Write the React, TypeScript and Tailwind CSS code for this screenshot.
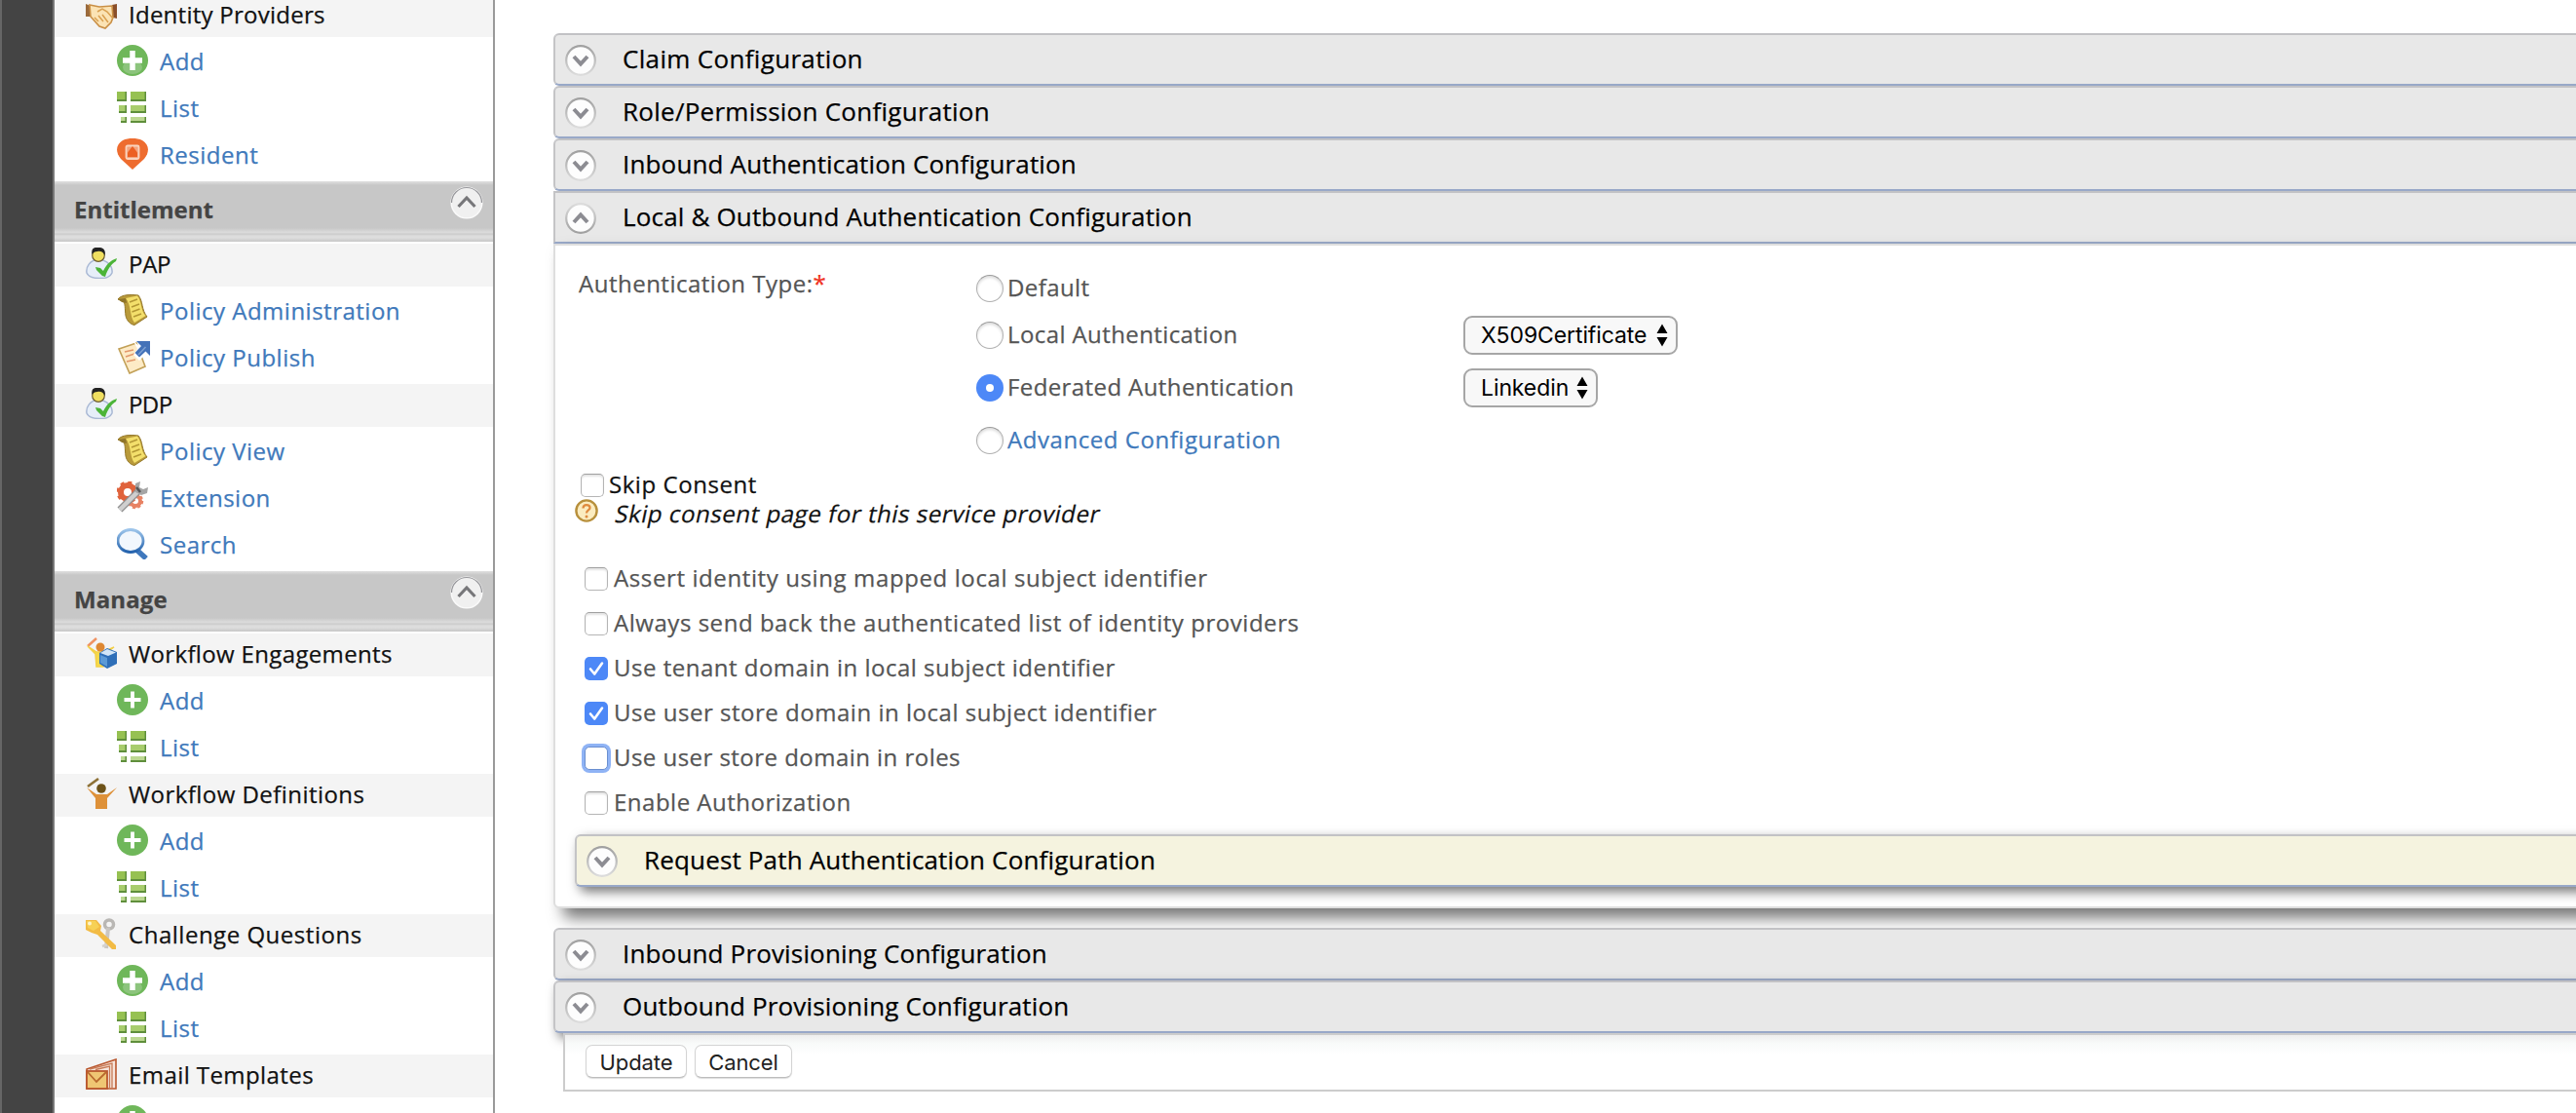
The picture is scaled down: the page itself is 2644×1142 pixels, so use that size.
import type { ReactNode } from "react";

function HandshakeIcon() {
  return (
    <svg width="32" height="32" viewBox="0 0 32 32">
      <path d="M0 6 L5 8 L5 19 L0 19Z" fill="#9a6a3c" />
      <path d="M27 7 L32 6 L32 21 L28 20Z" fill="#8a4f2a" />
      <path d="M4 7 L14 9 L27 8 L28 20 L26 25 L20 31 L14 29 L5 19Z" fill="#fbe3b4" stroke="#c98f45" strokeWidth="1.6" />
      <path d="M12 14 L17 11 L22 14 L28 21 M9 20 l4 4 M13 18 l5 6 M17 17 l6 8" stroke="#d9a050" strokeWidth="1.5" fill="none" />
    </svg>
  );
}

function AddIcon({ thick }: { thick?: boolean }) {
  return (
    <svg width="32" height="32" viewBox="0 0 32 32">
      <circle cx="16" cy="16" r="16" fill="#6fb75a" />
      {thick && <ellipse cx="16" cy="23" rx="10" ry="7" fill="#8cc47c" />}
      <path d={thick ? "M16 6v20M6 16h20" : "M16 7.500v17M7.500 16h17"} stroke="#fff" strokeWidth={thick ? 5.5 : 3.8} />
    </svg>
  );
}

function Tile({ x, y, w, h, fill }: { x: number; y: number; w: number; h: number; fill: string }) {
  return (
    <>
      <rect x={x} y={y} width={w} height={h} fill="#5f8f3c" />
      <rect x={x} y={y} width={w - 1.5} height={h - 2} fill={fill} />
    </>
  );
}

function ListIcon() {
  return (
    <svg width="32" height="32" viewBox="0 0 32 32">
      <Tile x={0} y={0} w={10} h={10} fill="#96c152" />
      <Tile x={14} y={0} w={16} h={10} fill="#96c152" />
      <Tile x={2} y={14} w={8} h={8} fill="#a8cd6d" />
      <Tile x={14} y={14} w={16} h={8} fill="#a8cd6d" />
      <Tile x={4} y={26} w={6} h={6} fill="#bcd891" />
      <Tile x={14} y={26} w={16} h={6} fill="#bcd891" />
    </svg>
  );
}

function ResidentIcon() {
  return (
    <svg width="32" height="32" viewBox="0 0 32 32">
      <path d="M16 32 L4 21 C-2 14 -1 6 6 2 C12 -0.6 20 -0.6 26 2 C33 6 34 14 28 21Z" fill="#ee6c2f" />
      <rect x="9.500" y="7.500" width="13" height="13.500" rx="1.5" fill="#f4a27c" stroke="#f9d3be" strokeWidth="1.800" />
      <path d="M16 8 L21 14.500 V19 H11 V14.500Z" fill="#ec5f22" />
    </svg>
  );
}

function UserCheckIcon() {
  return (
    <svg width="32" height="32" viewBox="0 0 32 32">
      <path d="M13 12 C4 13 0 20 1 26 C3 31 9 31.5 14 31.5 C20 31.5 25 31 27 26 C28 19 22 13 13 12Z" fill="#e6eef8" stroke="#a9b8d4" strokeWidth="1.5" />
      <circle cx="13" cy="8" r="6.3" fill="#f0df60" stroke="#6b5c30" strokeWidth="1.2" />
      <path d="M6.5 7 C5 0 10 -0.5 13 0 C18 -0.5 21 3 19.5 8 C18 4 15 3.5 12 4 C9 4 8 5 6.5 7Z" fill="#222" />
      <path d="M10 20 L15 21 L18 24 C21 18 25 13 32 11 L31 14 C26 17 22 23 20 30 L17 29 L11 23Z" fill="#4bb438" />
    </svg>
  );
}

function PolicyIcon() {
  return (
    <svg width="32" height="32" viewBox="0 0 32 32">
      <path d="M1 5 C5 0 14 0 22 1 C27 7 25 16 31 23 L18 31.5 C14 31 10 27 9 22 C8 15 9 9 6 7Z" fill="#b99a3a" stroke="#94782a" />
      <path d="M9 4 L21 1.5 C26 8 24 16 29.5 22 L18 29 C13 23 15 11 9 4Z" fill="#f3df6b" />
      <path d="M13 8 l8-3 M15 13 l8-3 M15.500 18 l8-3 M17 23 l8-3" stroke="#b39734" strokeWidth="1.6" />
      <path d="M1 5 L9 4 L10 9 L5 8Z" fill="#8f7429" />
    </svg>
  );
}

function PublishIcon() {
  return (
    <svg width="34" height="34" viewBox="0 0 34 34">
      <path d="M2 8 L20 2 L29 26 L13 33Z" fill="#fdebc6" stroke="#c2a057" strokeWidth="1.6" />
      <path d="M8 11 l9-2 M9 16 l9-3 M10 21 l9-2" stroke="#e2976a" strokeWidth="1.5" />
      <path d="M17 0 L21 8 L17 14 L23 20 L31 12Z" fill="#fff" />
      <path d="M20 0 H34 V15 L29.500 10.500 L23 16.500 L18.500 12 L25 5Z" fill="#4472b8" />
      <path d="M22 14 L29.500 6" stroke="#7ea0d2" strokeWidth="1.500" fill="none" />
    </svg>
  );
}

function ExtensionIcon() {
  return (
    <svg width="32" height="32" viewBox="0 0 32 32">
      <circle cx="11" cy="11" r="7" fill="none" stroke="#e0633c" strokeWidth="6" />
      <circle cx="11" cy="11" r="10" fill="none" stroke="#e0633c" strokeWidth="3" strokeDasharray="4 3.850" />
      <circle cx="19" cy="20" r="5" fill="none" stroke="#e88263" strokeWidth="4" />
      <circle cx="19" cy="20" r="7" fill="none" stroke="#e88263" strokeWidth="2.500" strokeDasharray="3 2.500" />
      <path d="M3 29 L22 10" stroke="#8f8f8f" strokeWidth="7" />
      <path d="M3 29 L22 10" stroke="#cfcfcf" strokeWidth="4.500" />
      <path d="M19 2 L24 0 L23 6 L27 8 L32 6 L31 12 L25 14 L19 11Z" fill="#a5a5a5" />
      <path d="M20 6 l4 5" stroke="#555" strokeWidth="2.500" />
    </svg>
  );
}

function SearchIcon() {
  return (
    <svg width="32" height="32" viewBox="0 0 32 32">
      <defs>
        <linearGradient id="lens-ring" x1="0" y1="0" x2="0" y2="1">
          <stop offset="0" stopColor="#9cc4ea" />
          <stop offset="1" stopColor="#2563ad" />
        </linearGradient>
      </defs>
      <path d="M20 22 L30 31" stroke="#3f78bd" strokeWidth="5.500" />
      <ellipse cx="14" cy="13" rx="13" ry="11.500" fill="#f2f7fd" stroke="url(#lens-ring)" strokeWidth="2.800" />
    </svg>
  );
}

function EngagementIcon() {
  return (
    <svg width="32" height="32" viewBox="0 0 32 32">
      <path d="M2 9 L11 1" stroke="#ef9262" strokeWidth="2.500" />
      <path d="M2 9 L10 17 L11 30 H18 V18 L29 10 L18 15 H11Z" fill="#f6d94a" stroke="#f3cf45" strokeWidth="1.500" />
      <circle cx="15" cy="10" r="4.500" fill="#de8832" />
      <path d="M14 16 L22 11 L32 15 V27 L22 32 L14 27Z" fill="#2f6fb8" />
      <path d="M15 16 L22 12 L31 15.500 L23 19Z" fill="#d3e6f7" />
      <path d="M15 18 L22 21 V30 L15 26Z" fill="#5c9ad6" />
    </svg>
  );
}

function DefinitionIcon() {
  return (
    <svg width="32" height="32" viewBox="0 0 32 32">
      <path d="M2 9 L13 1" stroke="#8d7136" strokeWidth="2.600" />
      <path d="M1 10 L10 21 V32 H22 V21 L32 10 L22 17 H11Z" fill="#de9139" />
      <circle cx="16" cy="11" r="4.800" fill="#6d5218" />
    </svg>
  );
}

function KeysIcon() {
  return (
    <svg width="32" height="32" viewBox="0 0 32 32">
      <circle cx="24" cy="6.500" r="4.500" fill="none" stroke="#b9b7b4" strokeWidth="3.500" />
      <path d="M23 10 L21 31" stroke="#c9c6c2" strokeWidth="4" />
      <path d="M17 29 l5-2" stroke="#d5d2ce" strokeWidth="2.500" />
      <path d="M0 2 L11 2 L16 8 L15 13 L31 28 V32 H27 L12 17 L6 15 L0 12Z" fill="#f2bb45" />
      <path d="M1 3 L10 3 L14 9 L8 13 L2 10Z" fill="#f7d155" />
      <circle cx="4" cy="5.500" r="2" fill="#fff3c9" />
    </svg>
  );
}

function EmailIcon() {
  return (
    <svg width="32" height="32" viewBox="0 0 32 32">
      <path d="M1 11 L31 1 V31 H1Z" fill="#f7e6dc" stroke="#b9572e" strokeWidth="1.600" />
      <path d="M4 11 L27 5 V31 M10 11.500 L24.500 8 V31" fill="none" stroke="#c77a55" strokeWidth="1.300" />
      <rect x="1" y="13" width="21" height="18" fill="#efc673" stroke="#b9572e" strokeWidth="1.800" />
      <path d="M2 14 L11 24 L21 14" fill="none" stroke="#b9692e" strokeWidth="1.800" />
    </svg>
  );
}

function CollapseIcon() {
  return (
    <svg width="34" height="34" viewBox="0 0 34 34">
      <circle cx="17" cy="17" r="15.800" fill="#f0f0f0" stroke="#fafafa" strokeWidth="1.500" />
      <path d="M1.500 17 A15.500 15.500 0 0 1 32.500 17" fill="none" stroke="#98989c" strokeWidth="1.200" />
      <path d="M8.500 21 L17 12 L25.500 21" fill="none" stroke="#77777a" strokeWidth="3.200" />
    </svg>
  );
}

function TriggerIcon({ open }: { open?: boolean }) {
  return (
    <svg width="32" height="32" viewBox="0 0 32 32" className={open ? "rotate-180" : ""}>
      <defs>
        <linearGradient id="trigger-ring" x1="0" y1="0" x2="0" y2="1">
          <stop offset="0" stopColor="#a0a0a0" />
          <stop offset="1" stopColor="#dcdcdc" />
        </linearGradient>
      </defs>
      <circle cx="16" cy="16" r="14.800" fill="#fdfdfd" stroke="url(#trigger-ring)" strokeWidth="2.200" />
      <path d="M9 12 L16 19.500 L23 12" fill="none" stroke="#8c8c92" strokeWidth="4" />
    </svg>
  );
}

function HelpIcon() {
  return (
    <svg width="24" height="24" viewBox="0 0 24 24">
      <circle cx="12" cy="12" r="10.600" fill="#fbecc0" stroke="#b8903c" strokeWidth="2.400" />
      <path d="M8.500 9.500 C8.500 5 15.500 5 15.500 9 C15.500 11.500 12 11.500 12 14.500" fill="none" stroke="#df8a3e" strokeWidth="2.300" />
      <circle cx="12" cy="18" r="1.500" fill="#df8a3e" />
    </svg>
  );
}

type Link = { label: string; icon: ReactNode };

function Group({ icon, title, tracking, items }: { icon: ReactNode; title: string; tracking: string; items: Link[] }) {
  return (
    <div className="pb-1">
      <div className="flex h-11 bg-[#f4f4f4] pl-8">
        <span className="mt-1 size-8 shrink-0">{icon}</span>
        <span className={`ml-3 whitespace-nowrap leading-[41px] text-[#111] ${tracking}`}>{title}</span>
      </div>
      {items.map((item) => (
        <div key={item.label} className="flex h-12 pl-16">
          <span className="mt-2 size-8 shrink-0">{item.icon}</span>
          <a className="ml-3 whitespace-nowrap leading-[49px] tracking-[0.5px] text-[#4079bb]">{item.label}</a>
        </div>
      ))}
    </div>
  );
}

function MenuHeader({ title, tracking }: { title: string; tracking: string }) {
  return (
    <div className="mb-0.5 flex h-[62px] items-start justify-between bg-[linear-gradient(to_bottom,#e0e0e0_0px,#c7c7c7_4px,#c7c7c7_48px,#dadada_52px,#dadada_53px,#c9c9c9_54px,#dddddd_56px,#dddddd_58px,#c6c6c6_62px)] pl-5 pr-2.5">
      <span className={`pt-1 font-bold leading-[49px] text-[#444] ${tracking}`}>{title}</span>
      <span className="mt-[5px]">
        <CollapseIcon />
      </span>
    </div>
  );
}

const addBold = { label: "Add", icon: <AddIcon thick /> };
const add = { label: "Add", icon: <AddIcon /> };
const list = { label: "List", icon: <ListIcon /> };

function Sidebar() {
  return (
    <nav className="w-[454px] shrink-0 border-x-2 border-l-[#777] border-r-[#999] bg-white">
      <div className="-mt-1.5">
        <Group icon={<HandshakeIcon />} title="Identity Providers" tracking="tracking-[0.25px]" items={[addBold, list, { label: "Resident", icon: <ResidentIcon /> }]} />
      </div>
      <MenuHeader title="Entitlement" tracking="tracking-[0px]" />
      <Group
        icon={<UserCheckIcon />}
        title="PAP"
        tracking="tracking-[-0.3px]"
        items={[
          { label: "Policy Administration", icon: <PolicyIcon /> },
          { label: "Policy Publish", icon: <PublishIcon /> },
        ]}
      />
      <Group
        icon={<UserCheckIcon />}
        title="PDP"
        tracking="tracking-[-0.6px]"
        items={[
          { label: "Policy View", icon: <PolicyIcon /> },
          { label: "Extension", icon: <ExtensionIcon /> },
          { label: "Search", icon: <SearchIcon /> },
        ]}
      />
      <MenuHeader title="Manage" tracking="tracking-[0.1px]" />
      <Group icon={<EngagementIcon />} title="Workflow Engagements" tracking="tracking-[0.35px]" items={[add, list]} />
      <Group icon={<DefinitionIcon />} title="Workflow Definitions" tracking="tracking-[0.45px]" items={[add, list]} />
      <Group icon={<KeysIcon />} title="Challenge Questions" tracking="tracking-[0.52px]" items={[addBold, list]} />
      <Group icon={<EmailIcon />} title="Email Templates" tracking="tracking-[0.42px]" items={[addBold]} />
    </nav>
  );
}

type BarProps = { title: string; open?: boolean; tone?: string; shadow?: boolean; tracking?: string };

function Bar({ title, open, tone = "bg-[#e8e8e8]", shadow, tracking = "tracking-[0.16px]" }: BarProps) {
  return (
    <div
      className={`flex h-[54px] border-2 border-b-[#98a8c8] border-l-[#c4c4c6] border-r-[#c4c4c6] border-t-[#c2c2c5] pl-2.5 ${tone} ${open ? "" : "rounded-md"} ${shadow ? "shadow-[5px_5px_12px_#777]" : ""}`}
    >
      <span className="mt-2.5 size-8 shrink-0">
        <TriggerIcon open={open} />
      </span>
      <h2 className={`ml-[27px] whitespace-nowrap text-[26px] leading-[48px] text-black ${tracking}`}>{title}</h2>
    </div>
  );
}

function Radio({ checked }: { checked?: boolean }) {
  return checked ? (
    <span className="flex size-7 shrink-0 items-center justify-center rounded-full bg-[#4d88f7]">
      <span className="size-2 rounded-full bg-white" />
    </span>
  ) : (
    <span className="size-7 shrink-0 rounded-full border border-[#b0b0b0] border-t-[#9a9a9a] bg-white shadow-[inset_0_2px_3px_#dcdcdc]" />
  );
}

function Checkbox({ checked, focused }: { checked?: boolean; focused?: boolean }) {
  if (checked) {
    return (
      <span className="size-6 shrink-0 rounded-[5px] bg-[#4d88f7]">
        <svg width="24" height="24" viewBox="0 0 24 24">
          <path d="M6 12.500 L10.200 17.500 L18 6.500" fill="none" stroke="#fff" strokeWidth="2.600" strokeLinecap="round" strokeLinejoin="round" />
        </svg>
      </span>
    );
  }
  return (
    <span
      className={`size-6 shrink-0 rounded-[5px] border bg-white ${focused ? "border-[#6a8fd0] shadow-[0_0_0_3px_#8fb3f5]" : "border-[#b5b5b5] border-t-[#a0a0a0] shadow-[inset_0_2px_2px_#e4e4e4]"}`}
    />
  );
}

function RadioRow({ label, checked, height, link, children }: { label: string; checked?: boolean; height: string; link?: boolean; children?: ReactNode }) {
  return (
    <div className={`flex items-center ${height}`}>
      <div className="flex w-[500px] items-center">
        <Radio checked={checked} />
        <span className={`mb-[3px] ml-1 whitespace-nowrap leading-[33px] ${link ? "tracking-[0.55px] text-[#4079bb]" : "tracking-[0.4px] text-[#555]"}`}>{label}</span>
      </div>
      {children}
    </div>
  );
}

function Select({ value, width }: { value: string; width: string }) {
  return (
    <div className={`flex h-10 items-center justify-between rounded-[9px] border-2 border-[#a6a6a6] bg-[#f8f8f8] pl-4 pr-2 font-[Inter,sans-serif] text-[23px] font-normal leading-9 tracking-[-0.1px] text-black [-webkit-text-stroke:0px] ${width}`}>
      <span>{value}</span>
      <svg width="12" height="24" viewBox="0 0 12 24">
        <path d="M0.500 10 L6 0.500 L11.500 10Z M0.500 14 L6 23.500 L11.500 14Z" fill="#000" />
      </svg>
    </div>
  );
}

const options = [
  { label: "Assert identity using mapped local subject identifier", tracking: "tracking-[0.61px]" },
  { label: "Always send back the authenticated list of identity providers", tracking: "tracking-[0.54px]" },
  { label: "Use tenant domain in local subject identifier", tracking: "tracking-[0.5px]", checked: true },
  { label: "Use user store domain in local subject identifier", tracking: "tracking-[0.52px]", checked: true },
  { label: "Use user store domain in roles", tracking: "tracking-[0.46px]", focused: true },
  { label: "Enable Authorization", tracking: "tracking-[0.5px]" },
];

function AuthenticationPanel() {
  return (
    <section className="h-[682px] rounded-b-md border-2 border-[#dedede] bg-white pl-5 pr-5 pt-[21px] shadow-[10px_10px_16px_#777]">
      <div className="flex pl-1">
        <div className="mt-px w-[408px] leading-[33px] tracking-[0.5px] text-[#555]">
          Authentication Type:<span className="text-[#f03020]">*</span>
        </div>
        <div>
          <RadioRow label="Default" height="h-[46px]" />
          <RadioRow label="Local Authentication" height="h-[50px]">
            <Select value="X509Certificate" width="w-[220px]" />
          </RadioRow>
          <RadioRow label="Federated Authentication" height="h-[58px]" checked>
            <Select value="Linkedin" width="w-[138px]" />
          </RadioRow>
          <RadioRow label="Advanced Configuration" height="h-[50px]" link />
        </div>
      </div>
      <div className="mt-[3px] flex h-[30px] pl-1.5">
        <span className="mt-1.5 flex">
          <Checkbox />
        </span>
        <span className="ml-[5px] leading-[33px] tracking-[0.55px] text-[#111]">Skip Consent</span>
      </div>
      <div className="flex h-[61px]">
        <span className="mt-0.5">
          <HelpIcon />
        </span>
        <span className="ml-[18px] h-[33px] -skew-x-12 leading-[33px] tracking-[0.57px] text-[#111]">Skip consent page for this service provider</span>
      </div>
      {options.map((o) => (
        <label key={o.label} className="flex h-[46px] items-center pl-2.5">
          <Checkbox checked={o.checked} focused={o.focused} />
          <span className={`mb-[3px] ml-1.5 leading-[33px] text-[#555] ${o.tracking}`}>{o.label}</span>
        </label>
      ))}
      <div className="mt-[9px]">
        <Bar title="Request Path Authentication Configuration" tone="bg-[#f5f3df]" shadow />
      </div>
    </section>
  );
}

function Button({ children, width }: { children: ReactNode; width: string }) {
  return (
    <button className={`h-[34px] rounded-[7px] border border-[#d4d4d4] border-b-[#bcbcbc] bg-white pt-0.5 font-[Inter,sans-serif] text-[22px] font-normal leading-[30px] tracking-[-0.1px] text-[#222] shadow-[0_1px_1px_#dddddd] [-webkit-text-stroke:0px] ${width}`}>
      {children}
    </button>
  );
}

export default function App() {
  return (
    <div className="flex h-[1142px] w-full overflow-hidden bg-white font-['Open_Sans','Noto_Sans',sans-serif] text-2xl font-medium [-webkit-text-stroke:0.25px]">
      <div className="w-[54px] shrink-0 border-l-2 border-[#666] bg-[#444]" />
      <Sidebar />
      <main className="-mr-10 ml-[60px] min-w-0 flex-1 pt-[34px]">
        <Bar title="Claim Configuration" tracking="tracking-[0.33px]" />
        <Bar title="Role/Permission Configuration" tracking="tracking-[0.26px]" />
        <Bar title="Inbound Authentication Configuration" />
        <Bar title="Local & Outbound Authentication Configuration" open />
        <AuthenticationPanel />
        <div className="mt-5">
          <Bar title="Inbound Provisioning Configuration" />
          <Bar title="Outbound Provisioning Configuration" shadow />
        </div>
        <div className="ml-2.5 flex h-[60px] gap-2 border-2 border-[#ccc] bg-[linear-gradient(to_bottom,#eeeeee_0px,#f8faf9_8px,#ffffff_20px)] pl-[21px] pt-2.5">
          <Button width="w-[104px]">Update</Button>
          <Button width="w-[100px]">Cancel</Button>
        </div>
      </main>
    </div>
  );
}
